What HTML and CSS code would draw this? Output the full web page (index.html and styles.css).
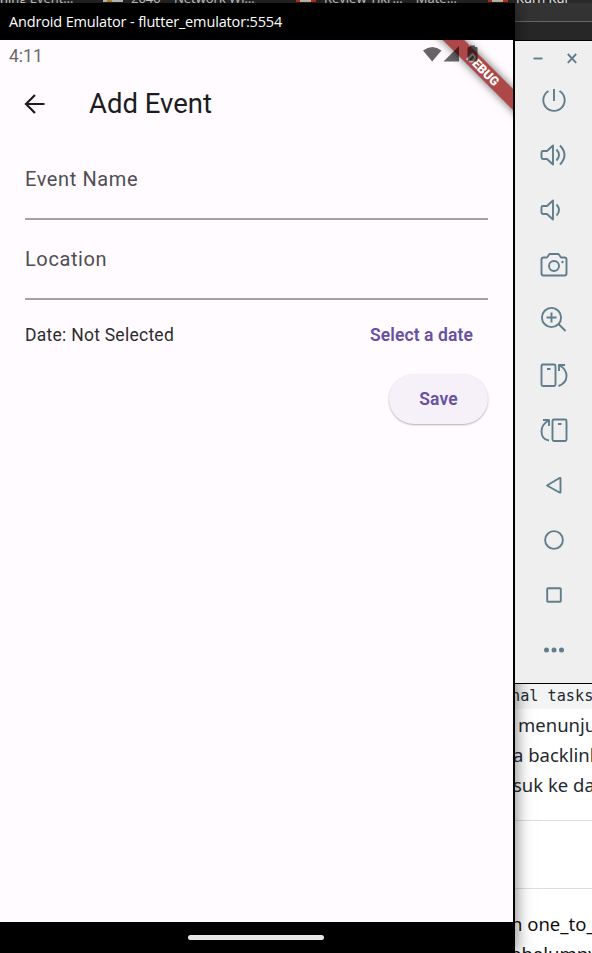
FILE: index.html
```html
<!DOCTYPE html>
<html lang="en">
<head>
<meta charset="utf-8">
<title>Android Emulator</title>
<link rel="stylesheet" href="styles.css">
</head>
<body>
<div class="desktop">
  <div class="tabstrip">
    <span class="tab tab-a">ning Event…</span>
    <span class="fav fav-a"></span>
    <span class="tab tab-b">2040 – Network Wi…</span>
    <span class="fav fav-b"></span>
    <span class="tab tab-c">Review Tikr… – Mate…</span>
    <span class="fav fav-b"></span>
    <span class="tab tab-d">Kurn Kur</span>
  </div>
  <div class="browserbar"></div>
  <article class="document">
    <p class="code">nal tasks</p>
    <div class="prose">
      <p class="l1">menunju</p>
      <p class="l2">a backlink</p>
      <p class="l3">suk ke da</p>
    </div>
    <div class="blank"></div>
    <div class="prose dark">
      <p class="l4">n one_to_</p>
      <p class="l5">ebelumny</p>
    </div>
  </article>

  <section class="emulator">
    <header class="titlebar">Android Emulator - flutter_emulator:5554</header>
    <main class="screen">
      <div class="status">
        <span class="clock">4:11</span>
        <svg class="signals" width="62" height="20" viewBox="0 0 62 20">
          <path d="M1 5.500Q10.500-1.500 19.500 5.500L10.200 16.500z"/>
          <path d="M21.500 16.500 37 1v15.500z"/>
          <path d="M45.500 3q0-1 1-1h1.500V.5h5V2h1.500q1 0 1 1v12.500q0 1-1 1h-8q-1 0-1-1z"/>
        </svg>
      </div>
      <div class="appbar">
        <svg width="24" height="24" viewBox="0 0 24 24"><path d="M21.500 12H3M12 3 3 12 12 21"/></svg>
        <h1><span>Add Event</span></h1>
      </div>
      <form class="form">
        <label class="field"><span class="name">Event Name</span></label>
        <label class="field"><span class="loc">Location</span></label>
        <div class="date-row">
          <span class="date">Date: Not Selected</span>
          <a class="pick">Select a date</a>
        </div>
        <button type="button" class="save">Save</button>
      </form>
      <div class="debug"><span>DEBUG</span></div>
    </main>
    <footer class="navbar"><i></i></footer>
  </section>

  <aside class="tools">
    <div class="controls">
      <svg width="10" height="12" viewBox="0 0 10 12"><path d="M.5 6.500h9"/></svg>
      <svg width="10" height="12" viewBox="0 0 10 12"><path d="M.8 2l8.400 8.800M9.200 2 .8 10.800"/></svg>
    </div>
    <svg class="tool" viewBox="0 0 30 30"><path d="M9.500 6A10.700 10.700 0 1 0 20.500 6M15 4v12"/></svg>
    <svg class="tool" viewBox="0 0 30 30"><path d="M14 5.500v19l-6-5.500H4q-1.500 0-1.500-1.500v-5Q2.500 11 4 11h4zM17.500 9.500q5 5.500 0 11M21 5.500q9 9.500 0 19"/></svg>
    <svg class="tool" viewBox="0 0 30 30"><path d="M14 5.500v19l-6-5.500H4q-1.500 0-1.500-1.500v-5Q2.500 11 4 11h4zM17.500 9.500q5 5.500 0 11"/></svg>
    <svg class="tool" viewBox="0 0 30 30"><path d="M4.500 7.500H8L10.500 4h9L22 7.500h3.500q2 0 2 2v14q0 2-2 2h-21q-2 0-2-2v-14q0-2 2-2z"/><circle cx="15" cy="16" r="5"/><circle class="dot" cx="23.500" cy="12" r="1.200"/></svg>
    <svg class="tool" viewBox="0 0 30 30"><circle cx="12.500" cy="12.500" r="9.600"/><path d="M12.500 7.500v10M7.500 12.500h10M19.500 19l7 7"/></svg>
    <svg class="tool" viewBox="0 0 30 30"><rect x="2.500" y="4.500" width="14" height="21.500" rx="1.500"/><path d="M8 9h3.500M26 5h-6v6M20.500 5.500Q27.500 9 27.500 16q0 7-8 10"/></svg>
    <svg class="tool" viewBox="0 0 30 30"><rect x="13.500" y="4.500" width="14" height="21.500" rx="1.500"/><path d="M19 9h3.500M4 5h6v6M9.500 5.500Q2.500 9.500 2.500 16.500q0 8 7.500 9"/></svg>
    <svg class="tool" viewBox="0 0 30 30"><path d="M8 15.500 20.500 8q1-.5 1 .5v13.500q0 1-1 .5z"/></svg>
    <svg class="tool" viewBox="0 0 30 30"><circle cx="15" cy="15" r="8.900"/></svg>
    <svg class="tool" viewBox="0 0 30 30"><rect x="8.200" y="8.200" width="13.600" height="13.600" rx=".8"/></svg>
    <svg class="tool" viewBox="0 0 30 30"><circle class="dot" cx="7.500" cy="15" r="2.500"/><circle class="dot" cx="15" cy="15" r="2.500"/><circle class="dot" cx="22.500" cy="15" r="2.500"/></svg>
  </aside>
</div>
</body>
</html>
```
FILE: styles.css
```css
* { box-sizing: border-box; }
body, p, h1 { margin: 0; }
.desktop {
  position: relative;
  width: 592px;
  height: 953px;
  overflow: hidden;
  background: #fff;
  font-family: Roboto, sans-serif;
}

/* Browser behind the emulator */
.tabstrip {
  display: flex;
  height: 3px;
  overflow: hidden;
  background: #292929;
  color: #eee;
  font: 13px/16px "Open Sans", sans-serif;
  white-space: nowrap;
}
.tab { margin-top: -10px; flex: none; overflow: hidden; }
.tab-a { width: 103px; }
.tab-b { width: 173px; padding-left: 8px; }
.tab-c { width: 172px; padding-left: 8px; }
.tab-d { padding-left: 8px; }
.fav { flex: none; width: 20px; height: 2px; background: linear-gradient(90deg, #ddd 20%, #d5a52b 20% 45%, #ddd 45%); }
.fav-b { background: linear-gradient(90deg, #d83b10 20%, #e8d8d0 20% 75%, #d83b10 75%); }
.browserbar {
  height: 38px;
  background: linear-gradient(#333 18px, #666 18px 19px, #272727 19px);
}
.document {
  margin: 643px 0 0 511px;
  width: 81px;
  overflow: hidden;
  color: #24292f;
  white-space: nowrap;
}
.code {
  height: 25px;
  background: #f3f4f4;
  font: 15.200px/25px "DejaVu Sans Mono", monospace;
}
.prose { padding: 1px 0 0 2px; font: 18.500px/30px "Noto Sans", sans-serif; }
.prose p { height: 30px; }
.prose.dark { padding: 20px 0 0; color: #111; }
.blank { height: 69px; margin-top: 20px; border: solid #ddd; border-width: 1px 0; }
.l1 { padding-left: 5px; }

/* Emulator window */
.emulator {
  position: absolute;
  left: 0;
  top: 3px;
  width: 515px;
  height: 950px;
  border-right: 2px solid #000;
  background: #000;
  box-shadow: 1px 0 15px rgba(0, 0, 0, .5);
}
.titlebar {
  height: 37px;
  padding-left: 9px;
  color: #fff;
  font: 14.500px/37px "Open Sans", sans-serif;
  letter-spacing: -.150px;
  white-space: nowrap;
}
.screen {
  position: relative;
  height: 882px;
  overflow: hidden;
  background: #fffbfe;
}
.status {
  position: relative;
  z-index: 1;
  display: flex;
  justify-content: space-between;
  height: 32px;
  padding: 5px 29px 0 9px;
}
.clock { color: #6a686a; font-size: 17.500px; line-height: 22px; }
.signals { fill: rgba(0, 0, 0, .6); }
.appbar { display: flex; align-items: center; height: 64px; padding-left: 23px; }
.appbar svg { fill: none; stroke: #1c1b1f; stroke-width: 2.200; }
.appbar h1 {
  margin-left: 42px;
  color: #1c1b1f;
  font-size: 27.500px;
  font-weight: 400;
  line-height: 36px;
}
.form { display: flex; flex-direction: column; padding: 0 25px; margin-top: 4px; }
.field {
  height: 80px;
  padding-top: 26px;
  border-bottom: 2px solid #a5a1a5;
  color: #504d54;
  font-size: 20px;
  line-height: 26px;
  letter-spacing: .6px;
}
.date-row {
  display: flex;
  justify-content: space-between;
  padding: 24px 15px 0 0;
  font-size: 17.500px;
  line-height: 22px;
  white-space: nowrap;
}
.date { color: #2d2b30; letter-spacing: .26px; }
.pick { color: #6750a4; font-weight: 600; letter-spacing: .1px; }
.save {
  align-self: flex-end;
  width: 99px;
  height: 50px;
  margin-top: 28px;
  border: 0;
  border-radius: 25px;
  background: #f6f1f9;
  box-shadow: 0 1px 2px rgba(0, 0, 0, .3);
  color: #6750a4;
  font: 600 17.500px Roboto, sans-serif;
  letter-spacing: .1px;
}
.debug {
  position: absolute;
  left: 408px;
  top: 22px;
  width: 150px;
  height: 15px;
  background: #ae4747;
  box-shadow: 0 0 8px rgba(0, 0, 0, .6);
  color: #fff;
  font-size: 12.500px;
  font-weight: 900;
  line-height: 15px;
  text-align: center;
  transform: rotate(45deg);
}
.navbar { display: flex; justify-content: center; padding: 13px 2px 0 0; }
.navbar i { width: 136px; height: 5px; border-radius: 3px; background: #e6e6e6; }

/* Emulator side toolbar */
.tools {
  position: absolute;
  left: 515px;
  top: 40px;
  width: 77px;
  height: 644px;
  border: solid #000;
  border-width: 1px 0;
  background: #efefef;
}
.tools svg { display: block; fill: none; stroke: #607d8b; stroke-width: 1.900; }
.tools .dot { fill: #607d8b; stroke: none; }
.controls { display: flex; gap: 24px; height: 44px; padding: 11px 0 0 17.500px; }
.tool { width: 30px; height: 30px; margin: 0 0 25px 24px; stroke-linejoin: round; }
```
